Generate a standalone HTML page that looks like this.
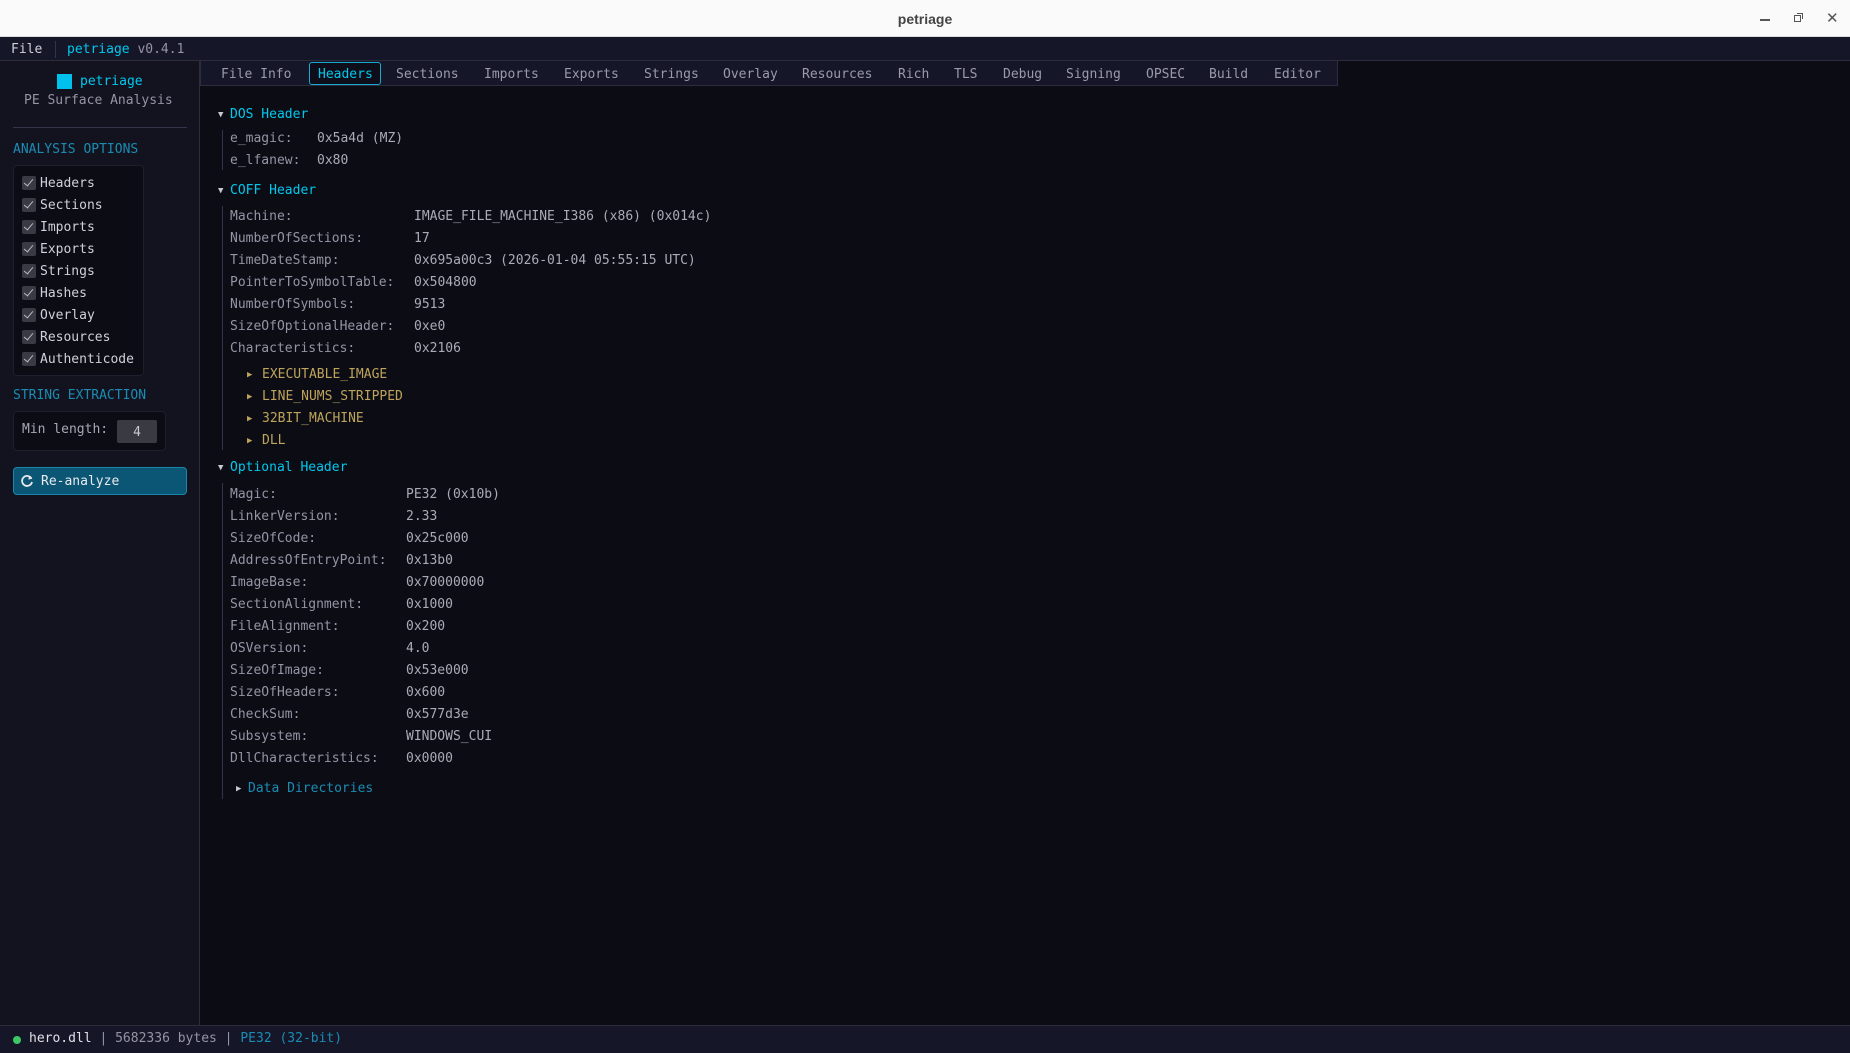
<!DOCTYPE html>
<html><head><meta charset="utf-8"><style>
*{margin:0;padding:0;box-sizing:border-box}
body{width:1850px;height:1053px;overflow:hidden;background:#0c0c15;font-family:"DejaVu Sans Mono","Liberation Mono",monospace;font-size:13px;color:#b4b4c0;position:relative}
.a{position:absolute;white-space:pre;line-height:16px}
#title{position:absolute;left:0;top:0;width:1850px;height:37px;background:#fafafa;border-bottom:1px solid #ddd}
#menu{position:absolute;left:0;top:37px;width:1850px;height:24px;background:#161629;border-bottom:1px solid #2c2c3c}
#side{position:absolute;left:0;top:61px;width:200px;height:964px;background:#13131f;border-right:1px solid #2c2c3c}
#tabs{position:absolute;left:200px;top:61px;width:1138px;height:25px;background:#161629;border:1px solid #2c2c40;border-top:none}
#status{position:absolute;left:0;top:1025px;width:1850px;height:28px;background:#161629;border-top:1px solid #2c2c3c}
.c{color:#00c8ee}
.k{color:#9494a4}
.v{color:#ababb6}
.g{color:#bea45a}
.sec{color:#1a8cb4}
.cb{position:absolute;left:22px;width:14px;height:14px;background:#3a3a44;border-radius:2px}
.cb:after{content:"";position:absolute;left:4px;top:1px;width:4px;height:8px;border:solid #bbb;border-width:0 1.5px 1.5px 0;transform:rotate(40deg)}
.tab{position:absolute;top:67px;color:#9a9aac}
.it{position:absolute;left:40px;color:#d0d0d8;white-space:pre;line-height:16px}
</style></head><body>
<div id="title"></div>
<div class="a" style="left:0;width:1850px;text-align:center;top:11px;font-family:'Liberation Sans',sans-serif;font-weight:bold;font-size:14px;color:#444">petriage</div>
<div style="position:absolute;left:1760px;top:19px;width:10px;height:1.5px;background:#555"></div>
<div style="position:absolute;left:1794px;top:15px;width:7px;height:7px;border:1.3px solid #555"></div>
<div style="position:absolute;left:1797px;top:13px;width:6px;height:6px;border-top:1px solid #555;border-right:1px solid #555"></div>
<div class="a" style="left:1826px;top:10px;font-family:'DejaVu Sans',sans-serif;font-size:15px;color:#555">✕</div>

<div id="menu"></div>
<div class="a" style="left:11px;top:42px;color:#d0d0d8">File</div>
<div style="position:absolute;left:55px;top:41px;width:1px;height:17px;background:#33334a"></div>
<div class="a" style="left:67px;top:42px"><span class="c">petriage</span> <span class="k">v0.4.1</span></div>

<div id="side"></div>
<div style="position:absolute;left:57px;top:74px;width:15px;height:15px;background:#00c0ee"></div>
<div class="a c" style="left:80px;top:74px">petriage</div>
<div class="a k" style="left:24px;top:93px">PE Surface Analysis</div>
<div style="position:absolute;left:13px;top:127px;width:174px;height:1px;background:#33334a"></div>
<div class="a sec" style="left:13px;top:142px">ANALYSIS OPTIONS</div>
<div style="position:absolute;left:13px;top:165px;width:131px;height:211px;background:#0c0c15;border:1px solid #1e1e2c;border-radius:4px"></div>
<div class="cb" style="top:176px"></div><div class="it" style="top:176px">Headers</div>
<div class="cb" style="top:198px"></div><div class="it" style="top:198px">Sections</div>
<div class="cb" style="top:220px"></div><div class="it" style="top:220px">Imports</div>
<div class="cb" style="top:242px"></div><div class="it" style="top:242px">Exports</div>
<div class="cb" style="top:264px"></div><div class="it" style="top:264px">Strings</div>
<div class="cb" style="top:286px"></div><div class="it" style="top:286px">Hashes</div>
<div class="cb" style="top:308px"></div><div class="it" style="top:308px">Overlay</div>
<div class="cb" style="top:330px"></div><div class="it" style="top:330px">Resources</div>
<div class="cb" style="top:352px"></div><div class="it" style="top:352px">Authenticode</div>
<div class="a sec" style="left:13px;top:388px">STRING EXTRACTION</div>
<div style="position:absolute;left:13px;top:411px;width:153px;height:40px;background:#0c0c15;border:1px solid #1e1e2c;border-radius:4px"></div>
<div class="a k" style="left:22px;top:422px;color:#a8a8b4">Min length:</div>
<div style="position:absolute;left:117px;top:420px;width:40px;height:23px;background:#3a3a42;border-radius:2px;color:#c8c8d0;text-align:center;line-height:25px">4</div>
<div style="position:absolute;left:13px;top:467px;width:174px;height:28px;background:#0a5674;border:1px solid #1a86aa;border-radius:4px"></div>
<svg style="position:absolute;left:20px;top:474px" width="14" height="14" viewBox="0 0 14 14"><path d="M11.5 4.5A5 5 0 1 0 12 8" fill="none" stroke="#e8e8ee" stroke-width="1.8"/><path d="M9 1.5l3.2 3.3-3.8 0.8z" fill="#e8e8ee"/></svg>
<div class="a" style="left:41px;top:474px;color:#eaeaf0">Re-analyze</div>

<div id="tabs"></div>
<div style="position:absolute;left:309px;top:62px;width:72px;height:23px;border:1px solid #18a8d0;border-radius:3px;background:#0e0e1a"></div>
<div class="tab" style="left:221px">File Info</div>
<div class="tab c" style="left:318px;color:#00c8ee">Headers</div>
<div class="tab" style="left:396px">Sections</div>
<div class="tab" style="left:484px">Imports</div>
<div class="tab" style="left:564px">Exports</div>
<div class="tab" style="left:644px">Strings</div>
<div class="tab" style="left:723px">Overlay</div>
<div class="tab" style="left:802px">Resources</div>
<div class="tab" style="left:898px">Rich</div>
<div class="tab" style="left:954px">TLS</div>
<div class="tab" style="left:1003px">Debug</div>
<div class="tab" style="left:1066px">Signing</div>
<div class="tab" style="left:1146px">OPSEC</div>
<div class="tab" style="left:1209px">Build</div>
<div class="tab" style="left:1274px">Editor</div>

<div class="a c" style="left:218px;top:107px;font-size:9px;color:#c8c8d0">▼</div><div class="a c" style="left:230px;top:107px">DOS Header</div>
<div style="position:absolute;left:222px;top:130px;width:1px;height:40px;background:#33334a"></div>
<div class="a k" style="left:230px;top:131px">e_magic:</div><div class="a v" style="left:317px;top:131px">0x5a4d (MZ)</div>
<div class="a k" style="left:230px;top:153px">e_lfanew:</div><div class="a v" style="left:317px;top:153px">0x80</div>

<div class="a" style="left:218px;top:183px;font-size:9px;color:#c8c8d0">▼</div><div class="a c" style="left:230px;top:183px">COFF Header</div>
<div style="position:absolute;left:222px;top:206px;width:1px;height:244px;background:#33334a"></div>
<div class="a k" style="left:230px;top:206px;line-height:22px">Machine:
NumberOfSections:
TimeDateStamp:
PointerToSymbolTable:
NumberOfSymbols:
SizeOfOptionalHeader:
Characteristics:</div>
<div class="a v" style="left:414px;top:206px;line-height:22px">IMAGE_FILE_MACHINE_I386 (x86) (0x014c)
17
0x695a00c3 (2026-01-04 05:55:15 UTC)
0x504800
9513
0xe0
0x2106</div>
<div class="a g" style="left:247px;top:364px;line-height:22px;font-size:9px">▶
▶
▶
▶</div>
<div class="a g" style="left:262px;top:364px;line-height:22px">EXECUTABLE_IMAGE
LINE_NUMS_STRIPPED
32BIT_MACHINE
DLL</div>

<div class="a" style="left:218px;top:460px;font-size:9px;color:#c8c8d0">▼</div><div class="a c" style="left:230px;top:460px">Optional Header</div>
<div style="position:absolute;left:222px;top:483px;width:1px;height:316px;background:#33334a"></div>
<div class="a k" style="left:230px;top:484px;line-height:22px">Magic:
LinkerVersion:
SizeOfCode:
AddressOfEntryPoint:
ImageBase:
SectionAlignment:
FileAlignment:
OSVersion:
SizeOfImage:
SizeOfHeaders:
CheckSum:
Subsystem:
DllCharacteristics:</div>
<div class="a v" style="left:406px;top:484px;line-height:22px">PE32 (0x10b)
2.33
0x25c000
0x13b0
0x70000000
0x1000
0x200
4.0
0x53e000
0x600
0x577d3e
WINDOWS_CUI
0x0000</div>
<div class="a" style="left:236px;top:781px;font-size:9px;color:#c8c8d0">▶</div><div class="a sec" style="left:248px;top:781px">Data Directories</div>

<div id="status"></div>
<div style="position:absolute;left:13px;top:1036px;width:8px;height:8px;border-radius:50%;background:#3cc864"></div>
<div class="a" style="left:29px;top:1031px"><span style="color:#e0e0e8">hero.dll</span> <span class="k">| 5682336 bytes |</span> <span class="sec">PE32 (32-bit)</span></div>
</body></html>
